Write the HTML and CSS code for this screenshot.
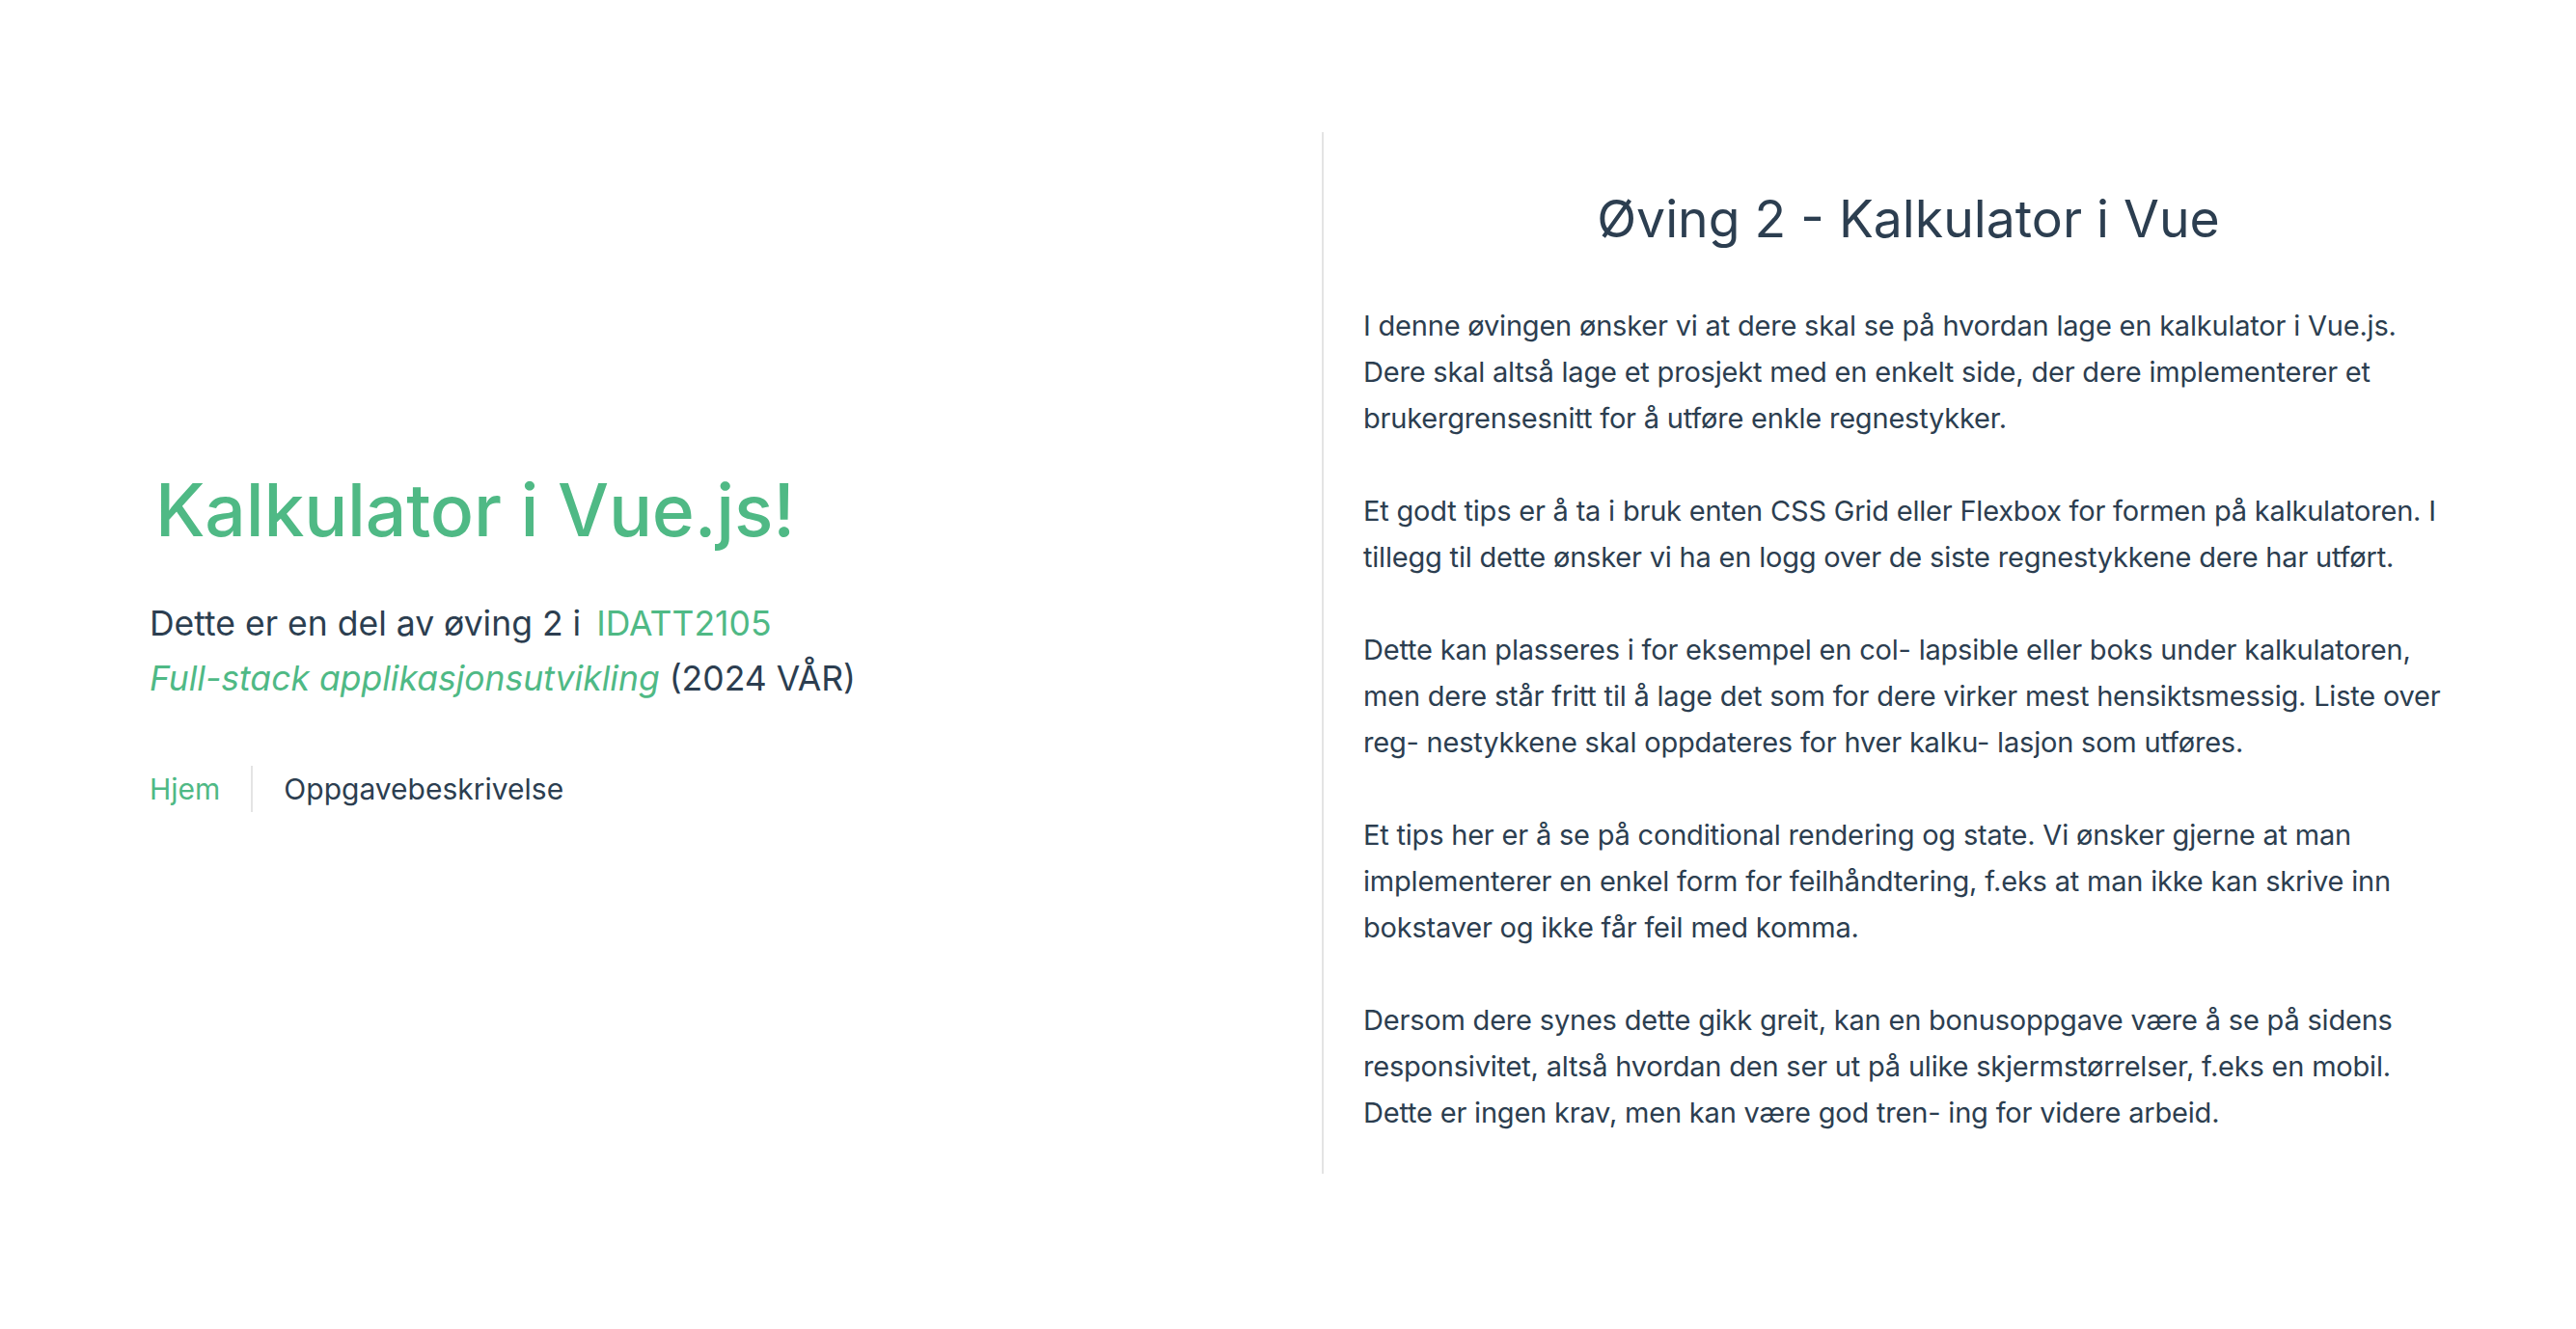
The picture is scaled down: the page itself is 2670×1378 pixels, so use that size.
FILE: index.html
```html
<!DOCTYPE html>
<html lang="no">
<head>
<meta charset="utf-8">
<title>Kalkulator i Vue.js!</title>
<link rel="stylesheet" href="styles.css">
</head>
<body>
<div class="app">
  <header class="header">
    <div class="wrapper">
      <div class="greetings">
        <h1 class="title green">Kalkulator i Vue.js!</h1>
        <h3 class="subtitle">Dette er en del av øving 2 i <a class="green link" href="#">IDATT2105</a><br><em class="course">Full-stack applikasjonsutvikling</em> (2024 VÅR)</h3>
      </div>
      <nav class="nav">
        <a class="nav-link active" href="#">Hjem</a><a class="nav-link" href="#">Oppgavebeskrivelse</a>
      </nav>
    </div>
  </header>
  <main class="about">
    <h1 class="about-title">Øving 2 - Kalkulator i Vue</h1>
    <p class="para">I denne øvingen ønsker vi at dere skal se på hvordan lage en kalkulator i Vue.js. Dere skal altså lage et prosjekt med en enkelt side, der dere implementerer et brukergrensesnitt for å utføre enkle regnestykker.</p>
    <p class="para">Et godt tips er å ta i bruk enten CSS Grid eller Flexbox for formen på kalkulatoren. I tillegg til dette ønsker vi ha en logg over de siste regnestykkene dere har utført.</p>
    <p class="para">Dette kan plasseres i for eksempel en col- lapsible eller boks under kalkulatoren, men dere står fritt til å lage det som for dere virker mest hensiktsmessig. Liste over reg- nestykkene skal oppdateres for hver kalku- lasjon som utføres.</p>
    <p class="para">Et tips her er å se på conditional rendering og state. Vi ønsker gjerne at man implementerer en enkel form for feilhåndtering, f.eks at man ikke kan skrive inn bokstaver og ikke får feil med komma.</p>
    <p class="para">Dersom dere synes dette gikk greit, kan en bonusoppgave være å se på sidens responsivitet, altså hvordan den ser ut på ulike skjermstørrelser, f.eks en mobil. Dette er ingen krav, men kan være god tren- ing for videre arbeid.</p>
  </main>
</div>
</body>
</html>
```

FILE: styles.css
```css
* { box-sizing: border-box; }

html, body {
  margin: 0;
  padding: 0;
  background: #ffffff;
}

body {
  font-family: Inter, "Noto Sans", "Liberation Sans", sans-serif;
  color: #2c3e50;
  font-size: 30px;
  line-height: 48px;
  -webkit-font-smoothing: antialiased;
}

.app {
  display: grid;
  grid-template-columns: 1370px 1214px;
  align-items: center;
  padding-top: 137px;
}

.header {
  display: flex;
  align-items: center;
  padding-left: 155px;
  padding-bottom: 35px;
}

.wrapper {
  display: flex;
  flex-direction: column;
  align-items: flex-start;
}

.green {
  color: #4fb985;
}

.title {
  margin: 0;
  padding: 6px;
  font-size: 75px;
  font-weight: 500;
  line-height: 90px;
  letter-spacing: -0.2px;
}

.subtitle {
  margin: 38px 0 0;
  font-size: 35.5px;
  font-weight: 400;
  line-height: 57px;
}

.link {
  text-decoration: none;
  padding: 6px;
}

.course {
  color: #4fb985;
  font-style: italic;
}

.nav {
  margin-top: 30px;
  padding-top: 32px;
  margin-left: -32px;
  display: flex;
}

.nav-link {
  color: #2c3e50;
  text-decoration: none;
  padding: 0 32px;
  border-left: 2px solid #e4e4e4;
  font-size: 30px;
  line-height: 48px;
}

.nav-link:first-child {
  border-left: 0;
}

.nav-link.active {
  color: #4fb985;
}

.about {
  border-left: 2px solid #e4e4e4;
  padding: 62px 41px 39px 41px;
  font-size: 29px;
  letter-spacing: -0.2px;
}

.about-title {
  margin: 0 0 60px;
  text-align: center;
  font-size: 53.5px;
  font-weight: 400;
  line-height: 55px;
  letter-spacing: 0;
}

.para {
  margin: 0 0 48px;
}

.para:last-child {
  margin-bottom: 0;
}
```
